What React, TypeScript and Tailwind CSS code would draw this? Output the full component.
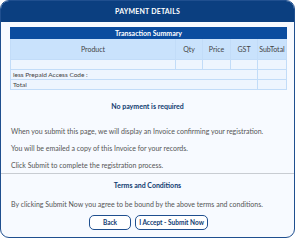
import React from 'react';

const App: React.FC = () => {
    const cell = "border border-[#c2dcf8]";
    return (
        <div className="w-[300px] h-[241px] bg-white" style={{ fontFamily: 'Lato, "Open Sans", sans-serif' }}>
            <div className="w-[295px] h-[238px] bg-[#f7faff] border border-[#1f4f8f] rounded-[9px] overflow-hidden flex flex-col">
                <div className="h-[21px] shrink-0 bg-[#0b3f80] text-white text-[7px] font-bold flex items-center justify-center tracking-[0.2px]">
                    PAYMENT DETAILS
                </div>

                {/* Transaction Summary */}
                <div className="px-[9px] pt-[5px]">
                    <table className="w-[277px] border-collapse text-[7px] leading-[8px] text-[#444]">
                        <thead>
                            <tr>
                                <th colSpan={5} className="h-[11px] p-0 bg-[#0a4c9f] text-white font-bold text-center border border-[#0a4c9f]">
                                    Transaction Summary
                                </th>
                            </tr>
                            <tr className="bg-[#c9e2fc] h-[21px]">
                                <th className={`${cell} w-[165px] p-0 font-normal`}>Product</th>
                                <th className={`${cell} w-[27px] p-0 font-normal`}>Qty</th>
                                <th className={`${cell} w-[28px] p-0 font-normal`}>Price</th>
                                <th className={`${cell} w-[27px] p-0 font-normal`}>GST</th>
                                <th className={`${cell} p-0 font-normal`}>SubTotal</th>
                            </tr>
                        </thead>
                        <tbody className="bg-[#eef5fe] text-[6.5px]">
                            <tr className="h-[10px]">
                                <td className={cell}></td>
                                <td className={cell}></td>
                                <td className={cell}></td>
                                <td className={cell}></td>
                                <td className={cell}></td>
                            </tr>
                            <tr className="h-[10px]">
                                <td colSpan={4} className={`${cell} p-0 pl-[2px]`}>less Prepaid Access Code :</td>
                                <td className={cell}></td>
                            </tr>
                            <tr className="h-[10px]">
                                <td colSpan={4} className={`${cell} p-0 pl-[2px]`}>Total</td>
                                <td className={cell}></td>
                            </tr>
                        </tbody>
                    </table>
                </div>

                <div className="text-center text-[7px] leading-[8px] font-bold text-[#103a70] mt-[12px]">No payment is required</div>

                <div className="px-[10px] text-[7px] text-[#555] mt-[17px] flex flex-col gap-[9px] leading-[8px]">
                    <p>When you submit this page, we will display an Invoice confirming your registration.</p>
                    <p>You will be emailed a copy of this Invoice for your records.</p>
                    <p>Click Submit to complete the registration process.</p>
                </div>

                <div className="border-t border-[#c8ccd2] mt-[4px]"></div>

                <div className="text-center text-[7px] leading-[8px] font-bold text-[#103a70] mt-[7px]">Terms and Conditions</div>

                <p className="px-[10px] text-[7px] text-[#555] mt-[11px] leading-[8px]">
                    By clicking Submit Now you agree to be bound by the above terms and conditions.
                </p>

                <div className="flex justify-center gap-[4px] mt-[7px] pl-[2px]">
                    <button className="w-[42px] h-[15px] bg-white border border-[#1f4f8f] rounded-[5px] text-[6.5px] font-bold text-[#103a70]">
                        Back
                    </button>
                    <button className="w-[73px] h-[15px] bg-white border border-[#1f4f8f] rounded-[5px] text-[6.5px] font-bold text-[#103a70]">
                        I Accept - Submit Now
                    </button>
                </div>
            </div>
        </div>
    );
};

export default App;
